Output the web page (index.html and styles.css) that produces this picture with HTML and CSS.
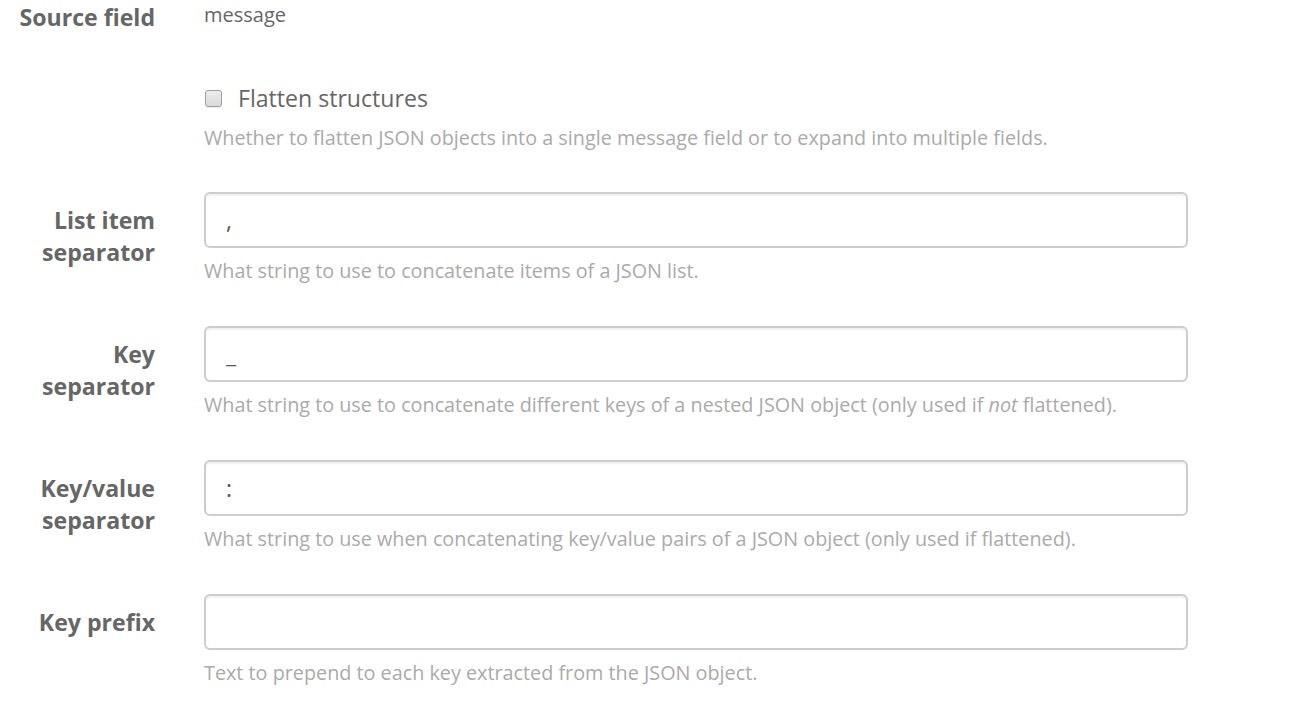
FILE: index.html
```html
<!DOCTYPE html>
<html lang="en">
<head>
<meta charset="utf-8">
<title>JSON extractor configuration</title>
<link rel="stylesheet" href="styles.css">
</head>
<body>
<form class="form">
  <div class="row row-static">
    <label class="label">Source field</label>
    <div class="control">
      <p class="static">message</p>
    </div>
  </div>

  <div class="row row-check">
    <div class="label"></div>
    <div class="control">
      <label class="check">
        <input type="checkbox" class="check-box">
        <span>Flatten structures</span>
      </label>
      <p class="help">Whether to flatten JSON objects into a single message field or to expand into multiple fields.</p>
    </div>
  </div>

  <div class="row">
    <label class="label" for="list-sep">List item separator</label>
    <div class="control">
      <input id="list-sep" class="input" type="text" value=",">
      <p class="help">What string to use to concatenate items of a JSON list.</p>
    </div>
  </div>

  <div class="row">
    <label class="label" for="key-sep">Key<br>separator</label>
    <div class="control">
      <input id="key-sep" class="input" type="text" value="_">
      <p class="help">What string to use to concatenate different keys of a nested JSON object (only used if <em>not</em> flattened).</p>
    </div>
  </div>

  <div class="row">
    <label class="label" for="kv-sep">Key/value separator</label>
    <div class="control">
      <input id="kv-sep" class="input" type="text" value=":">
      <p class="help">What string to use when concatenating key/value pairs of a JSON object (only used if flattened).</p>
    </div>
  </div>

  <div class="row">
    <label class="label" for="key-prefix">Key prefix</label>
    <div class="control">
      <input id="key-prefix" class="input" type="text" value="">
      <p class="help">Text to prepend to each key extracted from the JSON object.</p>
    </div>
  </div>
</form>
</body>
</html>
```

FILE: styles.css
```css
html, body {
  margin: 0;
  padding: 0;
  background: #fff;
}

body {
  font-family: "Open Sans", "Liberation Sans", sans-serif;
  font-size: 23.1px;
  line-height: 33px;
  color: #666;
}

.form {
  margin: 0;
  padding: 0;
}

.row {
  display: grid;
  grid-template-columns: 155px 984px;
  column-gap: 49px;
  margin-bottom: 25px;
}

.label {
  display: block;
  text-align: right;
  font-weight: 700;
  color: #666;
  padding-top: 12px;
  line-height: 32px;
}

.row-static {
  padding-top: 1px;
  margin-bottom: 38px;
}

.row-static .label {
  padding-top: 0;
}

.static {
  margin: 0;
  font-size: 20px;
  line-height: 28px;
  color: #666;
}

.control {
  min-width: 0;
}

.row-check .control {
  padding-top: 11px;
}

.row-check {
  margin-bottom: 24px;
}

.check {
  display: flex;
  align-items: center;
  gap: 16px;
  color: #666;
  font-size: 23.1px;
  line-height: 33px;
}

.check-box {
  appearance: none;
  -webkit-appearance: none;
  margin: 0 0 0 1px;
  width: 17px;
  height: 17px;
  border: 1px solid #9f9f9f;
  border-radius: 3px;
  background: linear-gradient(#ededed, #d9d9d9);
  box-shadow: 0 1px 1px rgba(0, 0, 0, 0.08);
}

.input {
  display: block;
  box-sizing: border-box;
  width: 100%;
  height: 56px;
  margin: 0;
  padding: 10px 20px;
  border: 2px solid #cdcdcd;
  border-radius: 6px;
  background: #fff;
  box-shadow: inset 0 2px 2px rgba(0, 0, 0, 0.06);
  font-family: "Open Sans", "Liberation Sans", sans-serif;
  font-size: 23.1px;
  line-height: 33px;
  color: #555;
  outline: none;
}

.help {
  margin: 9px 0 16px;
  font-size: 19.8px;
  line-height: 28px;
  color: #aaa;
}

.help em {
  font-style: italic;
}
```
